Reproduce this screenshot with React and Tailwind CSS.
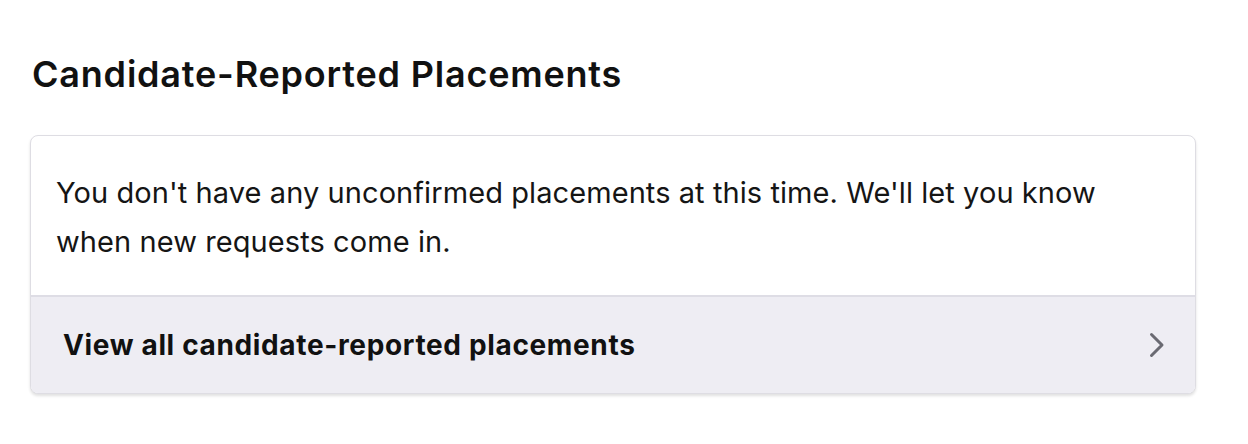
import React from "react";

const Chevron = () => (
  <svg width="16" height="26" viewBox="0 0 16 26" fill="none" className="text-[#6a6a72]">
    <path d="M2.5 2.5l10.5 10.5-10.5 10.5" stroke="currentColor" strokeWidth="3" strokeLinecap="round" strokeLinejoin="round" />
  </svg>
);

const App = () => {
  return (
    <div className="min-h-screen bg-white pt-[50px] pl-[30px] pr-[52px] font-['Inter',sans-serif] text-[#111]">
      <h1 className="pl-[2px] text-[36px] font-semibold leading-[48px] tracking-[0.8px]">
        Candidate-Reported Placements
      </h1>

      <div className="mt-[37px] rounded-[8px] border border-[#dedde3] bg-white shadow-[0_2px_3px_rgba(0,0,0,0.12)] overflow-hidden">
        {/* message */}
        <div className="pl-[25px] pr-[60px] pt-[32px] pb-[29px] border-b-2 border-[#dedde5]">
          <p className="text-[29px] leading-[49px] tracking-[0.08px] text-[#151515]">
            You don't have any unconfirmed placements at this time. We'll let you know
            when new requests come in.
          </p>
        </div>

        {/* footer link */}
        <div className="flex items-center justify-between h-[96px] bg-[#eeedf3] pl-[32px] pr-[30px]">
          <span className="text-[28px] font-bold tracking-[0.65px] text-[#111]">
            View all candidate-reported placements
          </span>
          <Chevron />
        </div>
      </div>
    </div>
  );
};

export default App;
